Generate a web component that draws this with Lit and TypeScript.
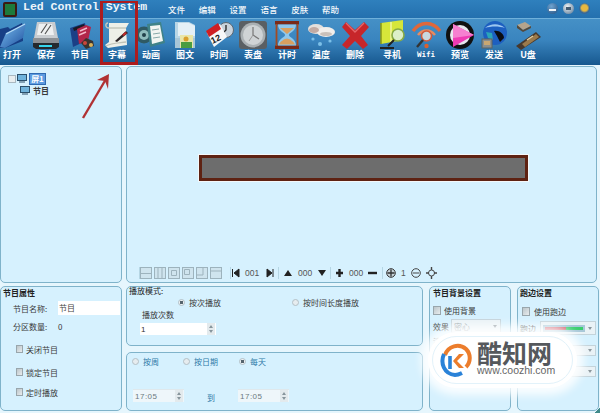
import { LitElement, html, css, svg } from 'lit';
import { customElement } from 'lit/decorators.js';

const icons: Record<string, unknown> = {
  open: svg`
    <defs><linearGradient id="f1" x1="0" y1="0" x2="1" y2="1"><stop offset="0" stop-color="#7cc0f0"/><stop offset="1" stop-color="#1d4f9e"/></linearGradient></defs>
    <path d="M3 9l8-2 2 2 12-6 1 3v15L8 28H3z" fill="#173f86"/>
    <path d="M3 27l6-14L29 3l-3 15L8 28z" fill="url(#f1)"/>
    <path d="M9 14L28 4" stroke="#b7dcf5" stroke-width="1.2"/>`,
  save: svg`
    <path d="M6 2h18l3 16H3z" fill="#c8ccd0"/>
    <path d="M8 4h13l2 11H6z" fill="#eef0f1"/>
    <path d="M10 13l6-9M14 14l6-9" stroke="#555" stroke-width="1.2"/>
    <path d="M2 18h26v7H2z" fill="#8b9095"/>
    <path d="M2 23h26v4l-3 2H5l-3-2z" fill="#24292e"/>
    <path d="M8 26h13" stroke="#35d6ee" stroke-width="2"/>`,
  program: svg`
    <path d="M5 8l15-5 3 17-15 7z" fill="#1b3f86"/>
    <path d="M8 8l11-4 1 3-11 4z" fill="#1a1a24"/>
    <path d="M12 9l9-4 5 2-3 14-9 3z" fill="#b2264a"/>
    <path d="M15 11l7-3M14 15l7-3" stroke="#f3b9c9" stroke-width="1.4"/>
    <path d="M16 23l5-5 7 3 1 5-8 3z" fill="#3a3330"/>
    <circle cx="20" cy="23" r="2" fill="#c9473c"/><circle cx="26" cy="25" r="2" fill="#d8b35c"/>`,
  caption: svg`
    <path d="M7 3h20l-3 5 1 17-19 3-3-3 4-3z" fill="#eef0e8"/>
    <path d="M6 3c-3 0-3 5 1 5h17" fill="none" stroke="#c5c8bc" stroke-width="1.4"/>
    <path d="M4 26c5-3 13-3 20-4" stroke="#bfc3b8" stroke-width="1.4" fill="none"/>
    <path d="M13 21l11-10 2 2-11 9z" fill="#2d2628"/>
    <path d="M20 15l3-3 2 1-3 3z" fill="#c22a2a"/>`,
  anim: svg`
    <circle cx="8" cy="15" r="8.500" fill="#2f5a64"/>
    <circle cx="8" cy="15" r="5" fill="#8fbcbc"/>
    <circle cx="8" cy="15" r="2" fill="#22414a"/>
    <path d="M11 4l14-2 4 21-15 4z" fill="#3f8288"/>
    <path d="M14 6l10-1 3 16-11 3z" fill="#f2f5f2"/>
    <path d="M16 10l7-1M17 14l7-1M17 18l7-1" stroke="#8aa" stroke-width="1"/>`,
  text: svg`
    <path d="M5 2h14l6 3v23H5z" fill="#b9d6e6"/>
    <path d="M8 3h11l6 3v10H8z" fill="#e4f0f6"/>
    <path d="M5 18h20v10H5z" fill="#a7c6d8"/>
    <path d="M10 15h13v13H10z" fill="#e9e6a8"/>
    <path d="M11 22h11v6H11z" fill="#4b9d3f"/>
    <circle cx="16" cy="19" r="2.500" fill="#d9a02c"/>`,
  time: svg`
    <circle cx="22" cy="10" r="7.500" fill="#c9d3dc" stroke="#5a6670"/>
    <path d="M22 5v5l-3 3" stroke="#222" fill="none" stroke-width="1.300"/>
    <path d="M3 13l13-9 7 13-13 10z" fill="#f7f7f7"/>
    <path d="M2 11L14 3l3 6L5 17z" fill="#cf1f23"/>
    <text x="7" y="23" font-size="9" font-weight="700" fill="#222" font-family="Liberation Sans" transform="rotate(-25 10 20)">12</text>`,
  clock: svg`
    <rect x="1" y="1" width="28" height="28" rx="3" fill="#5a5f63"/>
    <circle cx="15" cy="15" r="12.500" fill="#aab0b3"/>
    <circle cx="15" cy="15" r="10" fill="#cfd3d5"/>
    <path d="M15 7v8l6 4" stroke="#777" fill="none" stroke-width="1.200"/>
    <path d="M15 15l-4 6" stroke="#999"/>`,
  timer: svg`
    <path d="M3 1h24v3.500H3zM3 25.500h24V29H3z" fill="#7a2a18"/>
    <path d="M6 4.500h18c0 7-7 8-7 10.500s7 3.500 7 10.500H6c0-7 7-8 7-10.500S6 11.500 6 4.500z" fill="#8fc7ea"/>
    <path d="M8 8h14l-7 6zM7 24.500c1-3 6-6 8-6s7 3 8 6z" fill="#d8a060"/>
    <path d="M4.500 4v22M25.500 4v22" stroke="#a34a22" stroke-width="1.800"/>`,
  temp: svg`
    <ellipse cx="10" cy="9" rx="8" ry="5" fill="#e5e0dc"/>
    <ellipse cx="20" cy="12" rx="9" ry="5" fill="#f1eeeb"/>
    <ellipse cx="8" cy="10" rx="5" ry="3" fill="#c3aba3"/>
    <ellipse cx="20" cy="14" rx="6" ry="2" fill="#c9c0ba"/>
    <circle cx="7" cy="19" r="1.600" fill="#7cc0e8"/><circle cx="14" cy="24" r="2" fill="#7cc0e8"/><circle cx="24" cy="21" r="1.600" fill="#7cc0e8"/>`,
  del: svg`
    <path d="M6 2l9 8 9-8 5 5-8 9 7 9-5 4-8-8-8 8-5-4 8-9-8-9z" fill="#c7262a"/>
    <path d="M6 3l9 9 9-9" fill="none" stroke="#e4666a" stroke-width="1.400"/>`,
  find: svg`
    <path d="M4 3L26 0v20L4 24z" fill="#d6e63a"/>
    <path d="M14 2v20" stroke="#f2f6a8" stroke-width="1.400"/>
    <path d="M4 3v21" stroke="#8b9a18" stroke-width="1.600"/>
    <circle cx="21" cy="15" r="6" fill="#dcefc8" stroke="#86aa44" stroke-width="1.600"/>
    <path d="M17 20l-6 6M3 28h14" stroke="#222" stroke-width="2"/>`,
  wifi: svg`
    <path d="M2 11c7-10 20-10 27 0" fill="none" stroke="#e0683a" stroke-width="3.400"/>
    <path d="M7 15c5-6 12-6 17 0" fill="none" stroke="#e88a60" stroke-width="2.600"/>
    <circle cx="15.500" cy="16" r="5" fill="#c9d7de" stroke="#d35a3a" stroke-width="1.600"/>
    <path d="M12 20l-6 7" stroke="#333" stroke-width="2.400"/>
    <circle cx="15.500" cy="26" r="2.200" fill="#d9602f"/>`,
  play: svg`
    <circle cx="15" cy="15" r="14" fill="#111"/>
    <circle cx="15" cy="15" r="10" fill="#e8e8ee"/>
    <path d="M8 4l21 11L8 27z" fill="#ef3bb4"/>
    <path d="M8 4l21 11-21 3z" fill="#f680d0"/>`,
  send: svg`
    <circle cx="16" cy="13" r="12" fill="#1d5fc0"/>
    <path d="M6 8c6-5 14-5 20 0-6-2-14-2-20 0z" fill="#9cc6f0"/>
    <path d="M15 11c5-1 10 3 10 7l-4 4-3-6z" fill="#0c0c10"/>
    <path d="M7 12l6 1 1 7-5-2z" fill="#2aa5b8"/>
    <rect x="3" y="19" width="10" height="9" fill="#8a8f8f" stroke="#5d6361"/>
    <rect x="5" y="21" width="6" height="4" fill="#c8a772"/>`,
  usb: svg`
    <path d="M3 26l20-14 5 5-20 13z" fill="#47382c"/>
    <path d="M9 24l14-10 3 3-14 10z" fill="#9a7a4c"/>
    <path d="M14 20l6-4" stroke="#dfd0a8" stroke-width="1.400"/>
    <path d="M4 5l8-3 6 4-8 4z" fill="#b5a48c"/>
    <path d="M4 5v3l6 4 8-4V6l-8 4z" fill="#544a3c"/>`,
};

const tools: ([string, string] | null)[] = [
  ['打开', 'open'], ['保存', 'save'], ['节目', 'program'], null,
  ['字幕', 'caption'], ['动画', 'anim'], ['图文', 'text'], ['时间', 'time'], ['表盘', 'clock'],
  ['计时', 'timer'], ['温度', 'temp'], ['删除', 'del'], null,
  ['寻机', 'find'], ['Wifi', 'wifi'], ['预览', 'play'], ['发送', 'send'], ['U盘', 'usb'],
];

const layouts = [
  'M1 6.500h10', 'M4 1v11M8 1v11', 'M3.500 3.500h5v5h-5z', 'M2.500 2.500h5v5h-5z', 'M1 8h6V1', 'M1 4h10',
];

const spinArrows = html`
  <svg class="arrows" width="8" height="12" viewBox="0 0 8 12">
    <rect width="8" height="12" fill="#e3eaed"/>
    <path d="M2 5l2-3 2 3zM2 7l2 3 2-3z" fill="#87959c"/>
  </svg>`;

@customElement('app-root')
export class AppRoot extends LitElement {
  static styles = css`
    :host {
      display: block;
      position: relative;
      width: 600px;
      height: 413px;
      overflow: hidden;
      background: #e6f6fd;
      font-family: "Noto Sans CJK SC", "Liberation Sans", sans-serif;
      font-size: 8px;
      color: #3a3a3a;
    }
    .header { height: 65px; display: flex; flex-direction: column; background: #1d5f9e; }
    .titlebar {
      height: 18px;
      display: flex;
      align-items: center;
      background: linear-gradient(#2f80bd, #2470ae);
      position: relative;
    }
    .logo {
      width: 14px;
      height: 15px;
      margin-left: 3px;
      background: #1d7a3c;
      border: 2px solid #3b1a12;
      box-sizing: border-box;
      border-radius: 2px;
    }
    .app-name {
      width: 145px;
      margin-left: 6px;
      margin-top: -5px;
      font-family: "Liberation Mono", monospace;
      font-size: 11.500px;
      font-weight: 700;
      white-space: nowrap;
      color: #eef5fa;
    }
    .menu { display: flex; margin-top: -1px; font-weight: 500; }
    .menu span { width: 30.800px; color: #f4f8fb; font-size: 8.500px; }
    .win { margin-left: auto; display: flex; gap: 5px; margin-right: 10px; margin-top: -1px; }
    .win i { width: 11px; height: 11px; border-radius: 50%; display: block; position: relative; }
    .win .a { background: radial-gradient(circle at 40% 30%, #6fa4d0, #234f80); }
    .win .a::after { content: ""; position: absolute; left: 2px; right: 2px; top: 6px; height: 2px; background: #f2f6f9; }
    .win .b { background: radial-gradient(circle at 40% 35%, #f0f4f6, #4f7090); }
    .win .b::after { content: ""; position: absolute; left: 3px; right: 3px; top: 4px; height: 3px; background: #445c72; }
    .win .c { background: radial-gradient(circle at 50% 45%, #e8b840 0 3px, #37689a 5px); }
    .toolbar {
      flex: 1;
      display: flex;
      margin-left: -5px;
      background: linear-gradient(#4590c6 0, #3a85bf 45%, #17588f 100%);
      border-top: 1px solid #6fb0da;
      box-sizing: border-box;
    }
    .tool { width: 34px; flex: none; display: flex; flex-direction: column; align-items: center; }
    .tool svg { display: block; margin-top: 1px; flex: none; }
    .tool span {
      margin-top: -2px;
      height: 13px;
      line-height: 13px;
      color: #fff;
      font-weight: 700;
      font-size: 9px;
      white-space: nowrap;
    }
    .tool .latin { font-family: "DejaVu Sans Mono", monospace; font-size: 7.500px; }
    .gap { width: 3px; flex: none; }

    .panel {
      box-sizing: border-box;
      flex: none;
      border: 1px solid #7fb3ca;
      border-radius: 5px;
      background: #d6f1fe;
    }
    .top { display: flex; height: 217px; margin-top: 1px; }
    .tree { width: 122px; padding: 5px 0 0 7px; }
    .main {
      width: 471px;
      margin-left: 4px;
      display: flex;
      flex-direction: column;
      align-items: flex-start;
    }
    .tree-row { display: flex; align-items: center; height: 13px; }
    .tree-row + .tree-row { margin: 0 0 0 12px; height: 11px; font-weight: 700; gap: 3px; }
    .tree-check { width: 8px; height: 8px; background: #e8eef0; border: 1px solid #a9b8c0; box-sizing: border-box; }
    .sel {
      margin-left: 2px;
      background: #5c9be0;
      color: #fff;
      border: 1px solid #2f6bb3;
      width: 17px;
      height: 12px;
      box-sizing: border-box;
      line-height: 10px;
      text-align: center;
      font-weight: 700;
    }
    .stage {
      box-sizing: border-box;
      width: 329px;
      height: 26px;
      margin: 88px 0 0 72px;
      background: #6d6d6d;
      border: 3px solid #5e2212;
      outline: 1px solid #f4f8fa;
    }
    .strip {
      margin-top: 86px;
      margin-left: 12px;
      height: 12px;
      display: flex;
      align-items: center;
      font-family: "Liberation Sans", sans-serif;
      font-size: 8.500px;
      color: #555;
      width: 456px;
      border-left: 1px solid #b5d6e4;
    }
    .strip svg { display: block; flex: none; }
    .bar { width: 1px; height: 12px; background: #b5d6e4; flex: none; }

    .bottom { display: flex; margin-top: 3px; height: 125px; }
    .attrs { width: 122px; padding-left: 2px; }
    .heading { font-weight: 700; height: 11px; line-height: 11px; color: #222; white-space: nowrap; }
    .field { display: flex; align-items: center; height: 14px; margin: 3px 0 0 10px; }
    .field label { width: 45px; }
    .input {
      display: block;
      box-sizing: border-box;
      background: #fff;
      width: 62px;
      height: 14px;
      line-height: 14px;
      padding-left: 1px;
      color: #444;
    }
    .count { height: 12px; margin-top: 5px; }
    .check { display: flex; align-items: center; gap: 3px; height: 12px; margin: 11px 0 0 13px; }
    .check.last { margin-top: 8px; }
    .box {
      width: 7px;
      height: 8px;
      flex: none;
      box-sizing: border-box;
      background: linear-gradient(135deg, #bcc6ca, #e8ecee);
      border: 1px solid #99a6ac;
    }

    .middle { width: 297px; margin-left: 4px; display: flex; flex-direction: column; gap: 6px; }
    .mode { height: 60px; padding-left: 2px; }
    .schedule { height: 59px; }
    .mode .heading { height: 10px; line-height: 8px; font-weight: 400; }
    .radios { display: flex; align-items: center; height: 10px; padding-left: 49px; }
    .radio { display: flex; align-items: center; gap: 4px; width: 114px; flex: none; white-space: nowrap; }
    .dot {
      width: 7px;
      height: 7px;
      flex: none;
      box-sizing: border-box;
      border-radius: 50%;
      background: #e6ecef;
      border: 1px solid #b4c0c6;
    }
    .dot.on { background: radial-gradient(circle, #56656e 0 1.500px, #eef2f4 2px); }
    .times { margin: 2px 0 0 13px; height: 12px; line-height: 12px; }
    .spin {
      display: flex;
      align-items: center;
      box-sizing: border-box;
      margin: 2px 0 0 11px;
      width: 76px;
      height: 12px;
      background: #fff;
      padding-left: 1px;
      font-family: "Liberation Sans", sans-serif;
      color: #333;
    }
    .arrows { margin-left: auto; margin-right: 1px; flex: none; display: block; }
    .sched-row { display: flex; align-items: center; height: 12px; margin-top: 2px; padding-left: 5px; color: #2f7aa8; }
    .time-row { display: flex; align-items: center; height: 13px; margin: 22px 0 0 6px; color: #2f7aa8; }
    .time {
      width: 51px;
      margin: 0;
      height: 13px;
      background: #eef6fa;
      color: #6d7a80;
      letter-spacing: 0.500px;
      padding-left: 2px;
      border-top: 1px solid #dfe8ec;
    }
    .to { width: 54px; text-align: center; margin-top: 3px; }

    .side { width: 82px; margin-left: 6px; padding-left: 3px; }
    .side.run { width: 82px; padding-left: 2px; }
    .opt { display: flex; align-items: center; gap: 3px; height: 12px; margin-top: 6px; white-space: nowrap; }
    .opt .box { width: 8px; height: 9px; }
    .run .opt { margin-left: 2px; margin-top: 7px; gap: 4px; }
    .sel-row { display: flex; align-items: center; height: 14px; margin-top: 3px; gap: 2px; white-space: nowrap; }
    .run .sel-row { gap: 4px; margin-top: 4px; }
    .sel-row span { width: 16px; flex: none; }
    .select {
      box-sizing: border-box;
      display: flex;
      align-items: center;
      height: 14px;
      width: 50px;
      flex: none;
      background: #e9f2f6;
      border: 1px solid #c3d3da;
      color: #8b979c;
      padding-left: 2px;
    }
    .select::after {
      content: "";
      margin-left: auto;
      margin-right: 3px;
      border: 2px solid transparent;
      border-top: 3px solid #8a969c;
      border-bottom: 0;
    }
    .run .select { width: 56px; }
    .line { width: 42px; height: 7px; background: linear-gradient(90deg, #d05a68 0 55%, #3bcf6e 55%); border: 2px solid #a8c8d8; box-sizing: border-box; }
    .run .spacer-sel { margin: 10px 0 0 20px; height: 11px; }
    .faded { margin-top: 2px; height: 12px; line-height: 12px; }

    /* annotation and watermark that lie over the screenshot */
    .callout {
      position: absolute;
      left: 100px;
      top: 1px;
      width: 38px;
      height: 64px;
      box-sizing: border-box;
      border: 3px solid #ac1c1e;
      border-top-width: 2px;
    }
    .arrow { position: absolute; left: 75px; top: 70px; }
    .grip { position: absolute; right: 0; bottom: 0; width: 6px; height: 6px; background: linear-gradient(135deg, transparent 50%, #3f8a8a 50%); }
    .mark {
      position: absolute;
      left: 428px;
      top: 332px;
      width: 149px;
      height: 56px;
      box-sizing: border-box;
      padding-left: 12px;
      display: flex;
      align-items: center;
      border-radius: 28px;
      background: #fff;
      outline: 1px solid #e2f2fa;
      outline-offset: -5px;
      box-shadow: 0 0 8px 7px rgba(255, 255, 255, 0.85);
    }
    .mark-text { margin: -5px 0 0 5px; display: flex; flex-direction: column; }
    .mark-name { font-size: 25px; font-weight: 700; color: #55585c; line-height: 26px; height: 26px; }
    .mark-url { font-family: "Liberation Sans", sans-serif; font-size: 10.500px; line-height: 11px; color: #666; white-space: nowrap; }
  `;

  private renderStrip() {
    const triUp = svg`<path d="M1 9L5 3l4 6z" fill="#222"/>`;
    const triDown = svg`<path d="M1 3l4 6 4-6z" fill="#222"/>`;
    return html`
      <div class="strip">
        ${layouts.map(d => html`
          <svg width="12" height="12" style="margin-right:2px">
            <rect x="0.500" y="0.500" width="11" height="11" fill="#cfe4ee" stroke="#9db3bd"/>
            <path d=${d} fill="none" stroke="#9db3bd"/>
          </svg>`)}
        <span class="bar" style="margin-left:6px"></span>
        <svg width="8" height="12" style="margin:0 5px 0 1px"><path d="M0.500 2v8M7 2v8L2 6z" fill="#222" stroke="#222"/></svg>
        <span style="width:21px">001</span>
        <svg width="8" height="12" style="margin-right:4px"><path d="M1 2v8l5-4zM7 2v8" fill="#222" stroke="#222"/></svg>
        <span class="bar"></span>
        <svg width="10" height="12" style="margin:0 5px 0 4px">${triUp}</svg>
        <span style="width:19px">000</span>
        <svg width="10" height="12" style="margin-right:3px">${triDown}</svg>
        <span class="bar"></span>
        <svg width="9" height="12" style="margin:0 5px 0 4px"><path d="M4.500 2v8M1 6h7" stroke="#222" stroke-width="2.400"/></svg>
        <span style="width:19px">000</span>
        <svg width="9" height="12" style="margin-right:5px"><path d="M0 6h9" stroke="#222" stroke-width="2.400"/></svg>
        <span class="bar"></span>
        <svg width="10" height="12" style="margin:0 5px 0 3px"><circle cx="5" cy="6" r="4.300" fill="#c6d2d8" stroke="#333"/><path d="M5 2.500v7M1.500 6h7" stroke="#333" stroke-width="1.300"/></svg>
        <span style="width:10px">1</span>
        <svg width="10" height="12" style="margin-right:5px"><circle cx="5" cy="6" r="4.300" fill="none" stroke="#444"/><path d="M2 6h6" stroke="#444"/></svg>
        <svg width="11" height="12"><circle cx="5.500" cy="6" r="3" fill="none" stroke="#444"/><path d="M5.500 0v3M5.500 9v3M0 6h3M8 6h3" stroke="#444" stroke-width="1.400"/></svg>
      </div>`;
  }

  render() {
    return html`
      <div class="header">
        <div class="titlebar">
          <div class="logo"></div>
          <div class="app-name">Led Control System</div>
          <div class="menu">
            ${['文件', '编辑', '设置', '语言', '皮肤', '帮助'].map(m => html`<span>${m}</span>`)}
          </div>
          <div class="win"><i class="a"></i><i class="b"></i><i class="c"></i></div>
        </div>
        <div class="toolbar">
          ${tools.map(t => t
            ? html`<div class="tool">
                <svg width="30" height="30" viewBox="0 0 30 30">${icons[t[1]]}</svg>
                <span class=${t[0] === 'Wifi' ? 'latin' : ''}>${t[0]}</span>
              </div>`
            : html`<div class="gap"></div>`)}
        </div>
      </div>

      <div class="top">
        <div class="panel tree">
          <div class="tree-row">
            <div class="tree-check"></div>
            <svg width="10" height="9" style="margin-left:1px"><rect x="0.500" y="0.500" width="9" height="6" fill="#6fb3dc" stroke="#2a4f6b"/><path d="M2 8h6" stroke="#2a4f6b"/></svg>
            <div class="sel">屏1</div>
          </div>
          <div class="tree-row">
            <svg width="10" height="9"><rect x="0.500" y="0.500" width="9" height="6" fill="#6fb3dc" stroke="#2a4f6b"/><path d="M2 8h6" stroke="#2a4f6b"/></svg>
            <span>节目</span>
          </div>
        </div>
        <div class="panel main">
          <div class="stage"></div>
          ${this.renderStrip()}
        </div>
      </div>

      <div class="bottom">
        <div class="panel attrs">
          <div class="heading">节目属性</div>
          <div class="field"><label>节目名称:</label><div class="input">节目</div></div>
          <div class="field count"><label>分区数量:</label><span>0</span></div>
          <div class="check"><i class="box"></i>关闭节目</div>
          <div class="check"><i class="box"></i>锁定节目</div>
          <div class="check last"><i class="box"></i>定时播放</div>
        </div>

        <div class="middle">
          <div class="panel mode">
            <div class="heading">播放模式:</div>
            <div class="radios">
              <div class="radio"><i class="dot on"></i>按次播放</div>
              <div class="radio"><i class="dot"></i>按时间长度播放</div>
            </div>
            <div class="times">播放次数</div>
            <div class="spin">1${spinArrows}</div>
          </div>
          <div class="panel schedule">
            <div class="sched-row">
              <div class="radio" style="width:51px"><i class="dot"></i>按周</div>
              <div class="radio" style="width:56px"><i class="dot"></i>按日期</div>
              <div class="radio"><i class="dot on"></i>每天</div>
            </div>
            <div class="time-row">
              <div class="spin time">17:05${spinArrows}</div>
              <div class="to">到</div>
              <div class="spin time">17:05${spinArrows}</div>
            </div>
          </div>
        </div>

        <div class="panel side">
          <div class="heading">节目背景设置</div>
          <div class="opt"><i class="box"></i>使用背景</div>
          <div class="sel-row"><span>效果</span><div class="select">密心</div></div>
          <div class="faded">淡入</div>
        </div>

        <div class="panel side run">
          <div class="heading">跑边设置</div>
          <div class="opt"><i class="box"></i>使用跑边</div>
          <div class="sel-row"><span>跑边</span><div class="select"><i class="line"></i></div></div>
          <div class="select spacer-sel"></div>
          <div class="select spacer-sel"></div>
        </div>
      </div>

      <div class="callout"></div>
      <svg class="arrow" width="40" height="55" viewBox="0 0 40 55">
        <path d="M8 48L31 9" stroke="#b03234" stroke-width="2.400"/>
        <path d="M34 4l-1 15-3-8-8-1z" fill="#b03234"/>
      </svg>
      <div class="grip"></div>

      <div class="mark">
        <svg width="32" height="34" viewBox="0 0 32 34" style="flex:none">
          <path d="M5 12C8 3 19 0 26 6c5 5 5 13 0 18" fill="none" stroke="#ec7d2c" stroke-width="4"/>
          <path d="M4 11C0 20 4 31 15 32c2 0 5-1 7-2" fill="none" stroke="#2a82d8" stroke-width="4"/>
          <path d="M10 13v13" stroke="#2a82d8" stroke-width="3.600"/>
          <path d="M24 11l-7 7 7 7h-5l-6-7 6-7z" fill="#ec7d2c"/>
        </svg>
        <div class="mark-text">
          <div class="mark-name">酷知网</div>
          <div class="mark-url">www.coozhi.com</div>
        </div>
      </div>
    `;
  }
}
